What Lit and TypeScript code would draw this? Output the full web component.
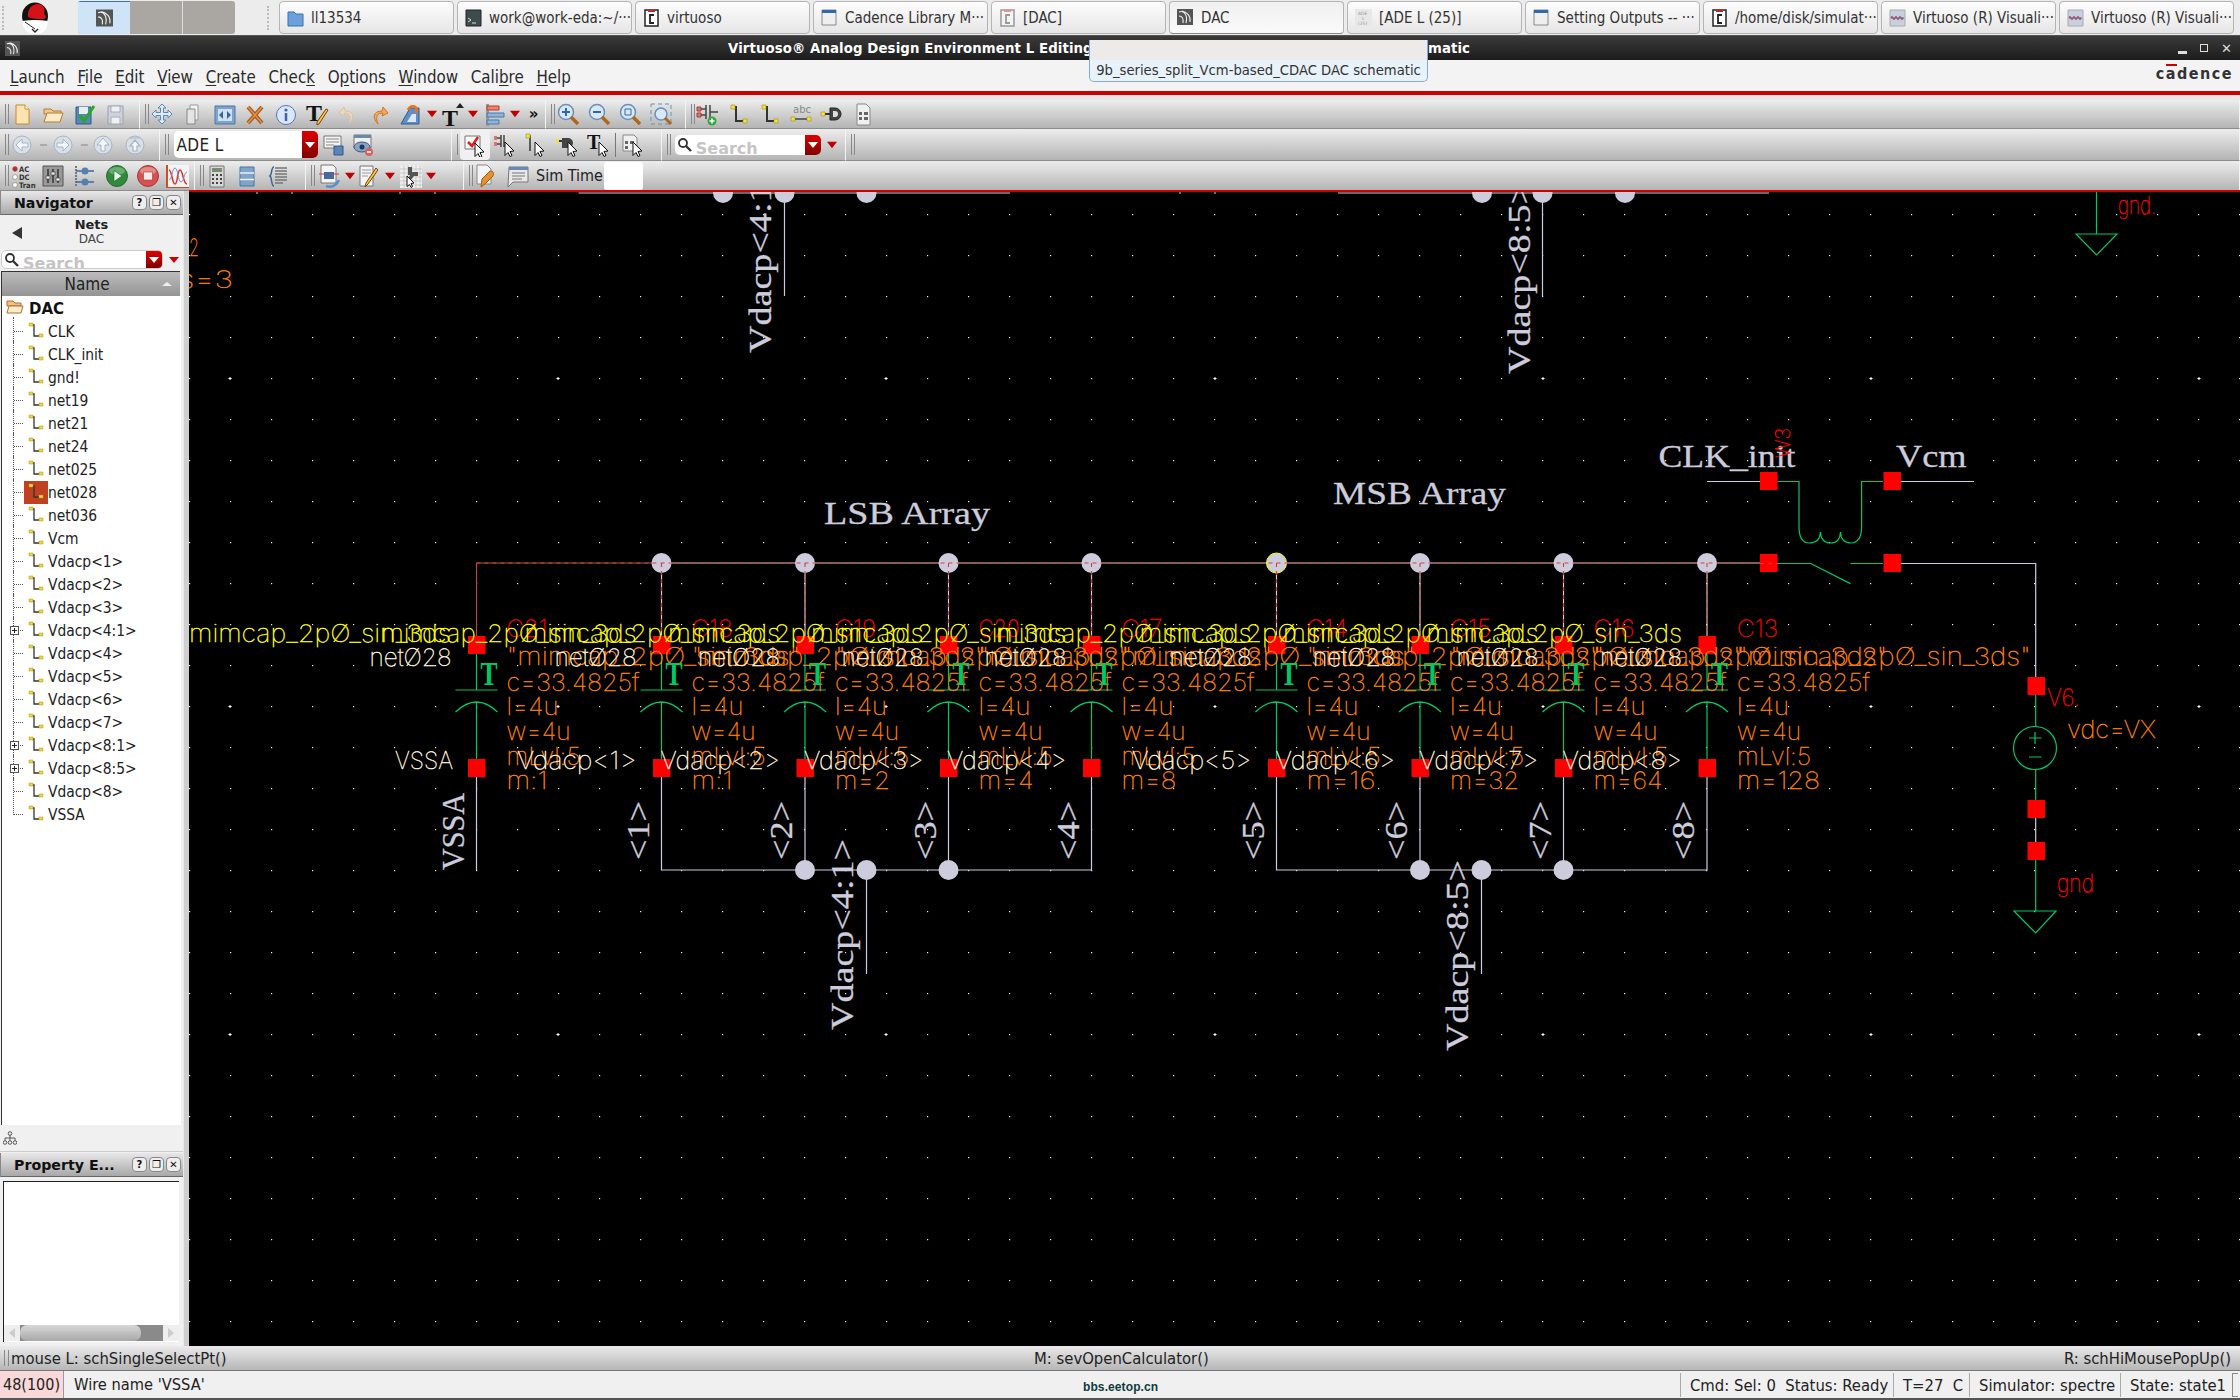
import { LitElement, html, css, svg } from "lit";
import { customElement } from "lit/decorators.js";

const ICONS: Record<string, any> = {
  doc: svg`<path d="M6 3h9l4 4v15H6z" fill="#fbe3b0" stroke="#c98a30"/><path d="M15 3v4h4" fill="#fff" stroke="#c98a30"/>`,
  open: svg`<path d="M3 7h7l2 2h8v3H3z" fill="#f2c888" stroke="#b87a30"/><path d="M3 20l3-9h16l-3 9z" fill="#fdebc8" stroke="#b87a30"/>`,
  savechk: svg`<path d="M4 5h15v17H4z" fill="#5b84b8" stroke="#2f5688"/><path d="M7 5h9v7H7z" fill="#e8eef6"/><path d="M7 13l5 6 10-15" fill="none" stroke="#28a828" stroke-width="3"/>`,
  save: svg`<path d="M5 4h15v18H5z" fill="#cdd3da" stroke="#9aa2aa"/><path d="M8 4h9v6H8zM8 15h9v7H8z" fill="#eef0f2" stroke="#aab"/>`,
  move: svg`<path d="M12 2l4 4h-2.500v4.500H18V8l4 4-4 4v-2.500h-4.500V18H16l-4 4-4-4h2.500v-4.500H6V16l-4-4 4-4v2.500h4.500V6H8z" fill="#dfeaf6" stroke="#5a88b8"/>`,
  copy: svg`<path d="M9 3h8v15H9z" fill="#f4f4f4" stroke="#999"/><path d="M6 7h8v15H6z" fill="#e4e4e4" stroke="#888"/>`,
  stretch: svg`<path d="M3 4h20v18H3z" fill="#7ea4cc" stroke="#4d76a4"/><path d="M6 7h14v12H6z" fill="#cfe0f0"/><path d="M11 9l-4 4 4 4zM15 9l4 4-4 4z" fill="#3a6494"/>`,
  del: svg`<path d="M5 5l14 16M19 5L5 21" stroke="#a85a18" stroke-width="4"/><path d="M5 5l14 16M19 5L5 21" stroke="#e89048" stroke-width="1.500"/>`,
  info: svg`<circle cx="12" cy="13" r="9.500" fill="#dbe6f6" stroke="#4f78c0"/><circle cx="12" cy="8" r="1.600" fill="#3a64b0"/><path d="M12 11v8" stroke="#3a64b0" stroke-width="2.500"/>`,
  tprop: svg`<text x="1" y="19" class="ib">T</text><path d="M23 8L14 22l-2 1 0-3L21 7z" fill="#f4c840" stroke="#804010"/>`,
  undo: svg`<path d="M8 5L3 11l6 3-1-3c6 0 8 4 5 11 6-6 5-13-4-13z" fill="#f0d8c0" stroke="#dcc0a4"/>`,
  redo: svg`<path d="M16 5l5 6-6 3 1-3c-6 0-8 4-5 11-6-6-5-13 4-13z" fill="#f0a860" stroke="#d07820"/>`,
  rotate: svg`<path d="M12 6L3 22h18V6z" fill="#5f8fc8" stroke="#2f5a94"/><path d="M14 12L9 20h9V12z" fill="#dbe6f6"/><path d="M10 8c2-5 8-5 9 0l-2 3" fill="none" stroke="#e07820" stroke-width="2.500"/>`,
  tup: svg`<text x="2" y="24" class="ib">T</text><path d="M14 2l-4 5h8z" fill="#222" transform="translate(6 -1)"/>`,
  align: svg`<path d="M4 2h3v22H4" fill="#999"/><path d="M5 4h12v4H5z" fill="#f08070" stroke="#b04030"/><path d="M5 11h17v4H5z" fill="#8fb4dc" stroke="#4a78ac"/><path d="M5 18h12v4H5z" fill="#8fb4dc" stroke="#4a78ac"/>`,
  zin: svg`<circle cx="10" cy="10" r="7.500" fill="#d8e8f8" stroke="#6a90b8" stroke-width="1.500"/><path d="M6 10h8M10 6v8" stroke="#2f68a8" stroke-width="2"/><path d="M15 15l7 7" stroke="#b06818" stroke-width="3.500"/>`,
  zout: svg`<circle cx="10" cy="10" r="7.500" fill="#d8e8f8" stroke="#6a90b8" stroke-width="1.500"/><path d="M6 10h8" stroke="#2f68a8" stroke-width="2"/><path d="M15 15l7 7" stroke="#b06818" stroke-width="3.500"/>`,
  zfit: svg`<circle cx="10" cy="10" r="7.500" fill="#d8e8f8" stroke="#6a90b8" stroke-width="1.500"/><path d="M7 7h6v6H7z" fill="none" stroke="#2f68a8"/><path d="M15 15l7 7" stroke="#b06818" stroke-width="3.500"/>`,
  zarea: svg`<path d="M2 2h20v20H2z" fill="none" stroke="#6a90b8" stroke-dasharray="4 3"/><circle cx="12" cy="12" r="6" fill="#d8e8f8" stroke="#6a90b8" stroke-width="1.500"/><path d="M16 16l6 6" stroke="#b06818" stroke-width="3"/>`,
  addinst: svg`<path d="M3 7h7M3 13h7M10 3v14M14 3v14M14 10h8" stroke="#444" stroke-width="1.500" fill="none"/><path d="M1 5h4v4H1zM1 11h4v4H1z" fill="#e07070" stroke="#a04040"/><circle cx="16" cy="19" r="4.500" fill="#30a840"/><path d="M13.500 19h5M16 16.500v5" stroke="#fff" stroke-width="1.500"/>`,
  wire: svg`<path d="M7 5h2v14h8" fill="none" stroke="#333" stroke-width="2"/><path d="M4 3h4v4H4zM16 17h4v4h-4z" fill="#f4e040" stroke="#a09020" stroke-width=".6"/>`,
  label: svg`<text x="4" y="11" class="ismall">abc</text><path d="M4 17h16" stroke="#444" stroke-width="1.500"/><path d="M2 15h4v4H2zM18 15h4v4h-4z" fill="#f4e040" stroke="#a09020" stroke-width=".6"/>`,
  gate: svg`<path d="M10 6h5a6 6 0 010 12h-5z" fill="#444" stroke="#222"/><path d="M13 9h2a3 3 0 010 6h-2z" fill="#ddd"/><path d="M4 12h6" stroke="#333" stroke-width="2"/><path d="M1 10h4v4H1z" fill="#f4e040" stroke="#a09020" stroke-width=".6"/>`,
  doclist: svg`<path d="M6 2h9l4 4v17H6z" fill="#f0f0f0" stroke="#888"/><path d="M8 10h3v3H8zM8 15h3v3H8zM13 10h4v3h-4zM13 15h4v3h-4z" fill="#666"/>`,
  navl: svg`<circle cx="12" cy="12" r="9" fill="#d8e0ea" stroke="#a8b4c4"/><path d="M6 12l6-6v4h6v4h-6v4z" fill="#f4f6f8" stroke="#a8b4c4"/>`,
  navr: svg`<circle cx="12" cy="12" r="9" fill="#d8e0ea" stroke="#a8b4c4"/><path d="M18 12l-6-6v4H6v4h6v4z" fill="#f4f6f8" stroke="#a8b4c4"/>`,
  navu: svg`<circle cx="12" cy="12" r="9" fill="#d8e0ea" stroke="#a8b4c4"/><path d="M12 5l-6 7h4v6h4v-6h4z" fill="#f4f6f8" stroke="#a8b4c4"/>`,
  navt: svg`<circle cx="12" cy="12" r="9" fill="#d8e0ea" stroke="#a8b4c4"/><path d="M7 5h10M12 7l-5 6h3v5h4v-5h3z" fill="#f4f6f8" stroke="#a8b4c4" stroke-width="1.200"/>`,
  savev: svg`<path d="M3 3h17v12H3z" fill="#f4f4f4" stroke="#777"/><path d="M5 6h13M5 9h13M5 12h8" stroke="#888"/><path d="M13 13h9v9h-9z" fill="#5b84b8" stroke="#2f5688"/>`,
  delv: svg`<path d="M3 2h17v13H3z" fill="#f0f0f0" stroke="#777"/><path d="M3 2h17v3H3z" fill="#6a88a8"/><ellipse cx="11" cy="14" rx="8" ry="5" fill="#8aa4c4" stroke="#3a5a84"/><circle cx="11" cy="14" r="2.500" fill="#1a3a64"/><circle cx="18" cy="19" r="4" fill="#d86060"/><path d="M16 19h4" stroke="#fff" stroke-width="1.500"/>`,
  selall: svg`<path d="M2 3h15v13H2z" fill="#f8f8f8" stroke="#777"/><path d="M5 9l4 4 6-9" fill="none" stroke="#d82020" stroke-width="2.500"/><path d="M12 10l9 9-4 .5 2 4-2 1-2-4-3 3z" fill="#fff" stroke="#111"/>`,
  selinst: svg`<path d="M2 5h6M2 11h6M8 2v12M11 2v12" stroke="#444" stroke-width="1.500"/><path d="M1 3h3v4H1zM1 9h3v4H1z" fill="#e07070"/><path d="M12 9l9 9-4 .5 2 4-2 1-2-4-3 3z" fill="#fff" stroke="#111"/>`,
  selwire: svg`<path d="M4 3h2v15" fill="none" stroke="#333" stroke-width="1.500"/><path d="M2 1h4v4H2z" fill="#f4e040" stroke="#a09020" stroke-width=".6"/><path d="M11 9l9 9-4 .5 2 4-2 1-2-4-3 3z" fill="#fff" stroke="#111"/>`,
  selgate: svg`<path d="M6 5h6a5 5 0 010 10H6z" fill="#444"/><path d="M1 8h5" stroke="#333" stroke-width="2"/><path d="M0 6h3v4H0z" fill="#f4e040"/><path d="M12 9l9 9-4 .5 2 4-2 1-2-4-3 3z" fill="#fff" stroke="#111"/>`,
  selt: svg`<text x="0" y="16" class="ib2">T</text><path d="M12 9l9 9-4 .5 2 4-2 1-2-4-3 3z" fill="#fff" stroke="#111"/>`,
  sellist: svg`<path d="M2 2h11l3 3v13H2z" fill="#f0f0f0" stroke="#888"/><path d="M4 8h3v3H4zM4 13h3v3H4zM9 8h4v3H9z" fill="#666"/><path d="M12 9l9 9-4 .5 2 4-2 1-2-4-3 3z" fill="#fff" stroke="#111"/>`,
  acdc: svg`<circle cx="3" cy="5" r="2.400" fill="#d02020" stroke="#777" stroke-width=".6"/><circle cx="3" cy="13" r="2.400" fill="#fff" stroke="#777" stroke-width=".6"/><circle cx="3" cy="21" r="2.400" fill="#fff" stroke="#777" stroke-width=".6"/><text x="7" y="8" class="ismall2">AC</text><text x="7" y="16" class="ismall2">DC</text><text x="7" y="24" class="ismall2">Trans</text>`,
  tune: svg`<path d="M2 2h20v20H2z" fill="#999" stroke="#555"/><path d="M7 5v14M12 5v14M17 5v14" stroke="#333" stroke-width="1.500"/><path d="M5 12h4v3H5zM10 8h4v3h-4zM15 14h4v3h-4z" fill="#eee" stroke="#333" stroke-width=".6"/>`,
  netlist: svg`<path d="M3 2v20" stroke="#777" stroke-dasharray="2 1" stroke-width="2"/><path d="M3 7h18M3 18h18" stroke="#3a6a9c" stroke-width="1.500"/><circle cx="12" cy="7" r="3.500" fill="#5480b0"/><circle cx="12" cy="18" r="3.500" fill="#5480b0"/>`,
  run: svg`<circle cx="12" cy="12" r="10.500" fill="#2f8a3c" stroke="#2a6a30"/><ellipse cx="12" cy="7" rx="8" ry="4" fill="#8cc894" opacity=".6"/><path d="M9 6.500l8 5.500-8 5.500z" fill="#e8f4e8" stroke="#1a5a24" stroke-width=".6"/>`,
  stop: svg`<circle cx="12" cy="12" r="10.500" fill="#d85050" stroke="#a03838"/><ellipse cx="12" cy="7" rx="8" ry="4" fill="#f0b0a8" opacity=".6"/><path d="M7.500 8h9v8h-9z" fill="#f4e8e8" stroke="#a03838" stroke-width=".6"/>`,
  wave: svg`<path d="M1 1h22v23H1z" fill="#f4f4f4"/><path d="M1 1v23h22" fill="none" stroke="#e04818" stroke-width="2"/><path d="M3 6c3 0 3 14 6 14s2-14 5-14 3 14 7 14" fill="none" stroke="#d83030" stroke-width="1.500"/><path d="M3 16c3 0 3-12 6-12s3 14 6 14 3-10 6-10" fill="none" stroke="#8090c0" stroke-width="1"/>`,
  calc: svg`<path d="M5 2h14v21H5z" fill="#d8d8d8" stroke="#777"/><path d="M7 4h10v4H7z" fill="#7a8a70"/><path d="M7 10h2v2H7zM11 10h2v2h-2zM15 10h2v2h-2zM7 14h2v2H7zM11 14h2v2h-2zM15 14h2v2h-2zM7 18h2v2H7zM11 18h2v2h-2zM15 18h2v2h-2z" fill="#444"/>`,
  db: svg`<path d="M5 3h14v19H5z" fill="#7fa4c8" stroke="#4a74a0"/><path d="M5 9h14M5 15.500h14" stroke="#e8f0f8" stroke-width="1.500"/>`,
  brace: svg`<path d="M8 3c-3 0-2 8-4 9 2 1 1 10 4 10" fill="none" stroke="#3a6494" stroke-width="1.500"/><path d="M9 4h12M9 7h12M9 10h12M9 13h12M9 16h12M9 19h8" stroke="#777" stroke-width="1.600"/>`,
  simdoc: svg`<path d="M3 1h12l3 3v15H3z" fill="#f4f4f4" stroke="#777"/><path d="M6 8h10v7H6z" fill="#4a68a0"/><path d="M1 10h5M16 10h5" stroke="#d04040"/><path d="M8 22c6 2 10 0 13-6" fill="none" stroke="#5a90c8" stroke-width="2.500"/>`,
  edit: svg`<path d="M3 2h13v20H3z" fill="#f4f4f4" stroke="#777"/><path d="M5 6h9M5 9h9M5 12h6" stroke="#999"/><path d="M21 6L11 20l-3 3 1-4L19 4z" fill="#f4c840" stroke="#804010"/>`,
  grid: svg`<path d="M1 1h22v24H1z" fill="#eee"/><path d="M1 5h22M1 9h22M1 13h22M1 17h22M1 21h22M5 1v24M9 1v24M13 1v24M17 1v24M21 1v24" stroke="#bbb" stroke-width=".7"/><path d="M9 3h4v5l6 0v4h-4l-4 5H8l3-6H9z" fill="#555"/><path d="M8 12l7 7-3 .5 1.500 3-1.500 1-1.500-3-2.500 2z" fill="#fff" stroke="#111"/>`,
  tool: svg`<path d="M4 1h10l4 4v15H4z" fill="#f4f4f4" stroke="#888"/><path d="M10 15l8-8c4 0 4 3 3 5l-8 8-4 3z" fill="#e89030" stroke="#a06010" transform="translate(-1 0)"/>`,
  note: svg`<path d="M4 3h19v15H8l-5 5z" fill="#e8e8e8" stroke="#777"/><path d="M4 3h19v3H4z" fill="#6a88b8"/><path d="M7 9h13M7 12h13M7 15h10" stroke="#777"/>`,
  dd: svg`<path d="M6 8h12l-6 8z" fill="#c00000"/>`,
};

function ic(name: string) {
  return html`<svg class="ico" viewBox="0 0 24 24" width="24" height="24" aria-hidden="true">${ICONS[name]}</svg>`;
}

type Item = { k: string; w: number; sel?: boolean };
const I = (k: string, w = 31, sel = false): Item => ({ k, w, sel });

const ROWS: { cls: string; segs: { w: number; items: Item[] }[] }[] = [
  {
    cls: "r1",
    segs: [
      { w: 140, items: [I("doc"), I("open"), I("savechk"), I("save")] },
      { w: 406, items: [I("move"), I("copy"), I("stretch"), I("del"), I("info"), I("tprop"), I("undo"), I("redo"), I("rotate"), I("dd", 13), I("tup", 27), I("dd", 14), I("align", 28), I("dd", 14), I("»", 24)] },
      { w: 140, items: [I("zin"), I("zout"), I("zfit"), I("zarea")] },
      { w: 1554, items: [I("addinst"), I("wire"), I("wire2"), I("label"), I("gate"), I("doclist")] },
    ],
  },
  {
    cls: "r2",
    segs: [
      { w: 160, items: [I("navl"), I("-", 11), I("navr", 29), I("-", 13), I("navu", 25), I("sp", 4), I("navt")] },
      { w: 292, items: [I("combo", 151), I("savev", 30), I("delv", 30)] },
      { w: 210, items: [I("sp", 1.5), I("selall", 30, true), I("selinst", 29), I("selwire", 33), I("selgate", 32), I("selt", 30), I("bar", 2), I("sellist", 34)] },
      { w: 184, items: [I("search", 152.5), I("dd", 22)] },
      { w: 1394, items: [] },
    ],
  },
  {
    cls: "r3",
    segs: [
      { w: 195, items: [I("sp", 4.5), I("acdc", 26), I("tune", 32), I("netlist", 32), I("run"), I("stop"), I("wave", 30)] },
      { w: 111, items: [I("calc", 30), I("db"), I("brace")] },
      { w: 158, items: [I("sp", 2.5), I("simdoc", 30), I("dd", 9), I("edit", 30), I("dd", 12), I("grid", 30), I("dd", 10)] },
      { w: 1776, items: [I("tool", 28), I("note", 37), I("simtime", 68), I("timebox", 39)] },
    ],
  },
];

const MENU = [
  ["", "L", "aunch"],
  ["", "F", "ile"],
  ["", "E", "dit"],
  ["", "V", "iew"],
  ["", "C", "reate"],
  ["Chec", "k", ""],
  ["O", "p", "tions"],
  ["", "W", "indow"],
  ["Cali", "b", "re"],
  ["", "H", "elp"],
];

const TASKS: [string, string][] = [
  ["folder", "ll13534"],
  ["term", "work@work-eda:~/···"],
  ["cicon", "virtuoso"],
  ["win", "Cadence Library M···"],
  ["cdim", "[DAC]"],
  ["swirl", "DAC"],
  ["ade", "[ADE L (25)]"],
  ["win", "Setting Outputs -- ···"],
  ["cicon", "/home/disk/simulat···"],
  ["wavei", "Virtuoso (R) Visuali···"],
  ["wavei", "Virtuoso (R) Visuali···"],
];

const TREE = ["CLK", "CLK_init", "gnd!", "net19", "net21", "net24", "net025", "net028", "net036", "Vcm", "Vdacp<1>", "Vdacp<2>", "Vdacp<3>", "Vdacp<4:1>", "Vdacp<4>", "Vdacp<5>", "Vdacp<6>", "Vdacp<7>", "Vdacp<8:1>", "Vdacp<8:5>", "Vdacp<8>", "VSSA"];

const SWIRL = svg`<path d="M0 0h16v16H0z" fill="#555"/><path d="M2 3c5-2 9 3 7 11M5 2c5 1 9 5 8 11M2 7c3 0 5 3 4 7" fill="none" stroke="#eee" stroke-width="1.100"/>`;

function taskIcon(k: string) {
  const body: Record<string, any> = {
    folder: svg`<path d="M1 3h6l2 2h7v12H1z" fill="#6aa0dc" stroke="#3a70ac"/>`,
    term: svg`<path d="M1 1h15v16H1z" fill="#3c4c4c" stroke="#222"/><path d="M3 9l3 2-3 2M7 14h4" stroke="#ddd" fill="none"/>`,
    cicon: svg`<path d="M2 1h13v16H2z" fill="#fff" stroke="#222" stroke-width="1.500"/><path d="M5 1h7v2H5z" fill="#d02020"/><path d="M11 6H7v8h4" fill="none" stroke="#222" stroke-width="1.800"/>`,
    cdim: svg`<path d="M2 1h13v16H2z" fill="#f4f4f4" stroke="#999" stroke-width="1.500"/><path d="M5 1h7v2H5z" fill="#e89090"/><path d="M11 6H7v8h4" fill="none" stroke="#999" stroke-width="1.800"/>`,
    win: svg`<path d="M1 1h14v15H1z" fill="#efefef" stroke="#888"/><path d="M1 1h14v3H1z" fill="#2f6aac"/>`,
    swirl: SWIRL,
    ade: svg`<path d="M0 0h17v17H0z" fill="#e8e8e8"/><text x="3" y="6" class="tiny">ADE</text><text x="7" y="11" class="tiny">L</text><text x="3" y="16" class="tiny">(25)</text>`,
    wavei: svg`<path d="M1 1h15v16H1z" fill="#c8d0e0" stroke="#aaa"/><path d="M2 9c2-6 2 6 4 0s2 6 4 0 2 6 4 0" fill="none" stroke="#c03030"/><path d="M2 9h13" stroke="#5060a0"/>`,
  };
  return html`<svg class="tico" viewBox="0 0 17 18" width="17" height="18" aria-hidden="true">${body[k]}</svg>`;
}

const COLS = [476.5, 661.5, 805, 948.5, 1091.5, 1276.5, 1420, 1563.5, 1707];
const NAMES = ["C21", "C18", "C19", "C20", "C17", "C14", "C15", "C16", "C13"];
const MS: [string, number][] = [["m:1", 41], ["m:1", 41], ["m=2", 55], ["m=4", 55], ["m=8", 55], ["m=16", 69], ["m=32", 69], ["m=64", 69], ["m=128", 83]];
const PINS = ["VSSA", "Vdacp<1>", "Vdacp<2>", "Vdacp<3>", "Vdacp<4>", "Vdacp<5>", "Vdacp<6>", "Vdacp<7>", "Vdacp<8>"];
const BUS = ["<1>", "<2>", "<3>", "<4>", "<5>", "<6>", "<7>", "<8>"];

const t = (x: number, y: number, w: number, s: string, c: string) =>
  svg`<text x=${x} y=${y} textLength=${w} lengthAdjust="spacingAndGlyphs" class=${c}>${s}</text>`;
const tr = (x: number, y: number, w: number, s: string, c: string) =>
  svg`<text x=${x} y=${y} textLength=${w} lengthAdjust="spacingAndGlyphs" class=${c} transform="rotate(-90 ${x} ${y})">${s}</text>`;
const sq = (x: number, y: number) => svg`<rect x=${x - 8.5} y=${y - 9} width="17.5" height="18" class="pin"/>`;
const jn = (x: number, y: number) => svg`<circle cx=${x} cy=${y} r="10" class="jn"/>`;

const HOT = "M476.500 565H1768.500M476.500 565V638M661.500 565V638M805 565V638M948.500 565V638M1091.500 565V638M1276.500 565V638M1420 565V638M1563.500 565V638M1707 565V638";
const HOT_W = "M661.500 565H1768.500M661.500 565V638M805 565V638M948.500 565V638M1091.500 565V638M1276.500 565V638M1420 565V638M1563.500 565V638M1707 565V638";
const MIM = "mimcap_2pØ_sin_3ds";

function schematic() {
  const majors: any[] = [];
  for (const x of [230, 558, 886, 1215, 1543, 1871, 2199])
    for (const y of [380, 708, 1036]) majors.push(svg`<path d="M${x - 1.5} ${y + 0.5}h3M${x} ${y - 1}v3" class="major"/>`);
  return svg`
  <svg class="sch" viewBox="189 193 2051 1153" width="2051" height="1153" aria-hidden="true">
    <defs>
      <pattern id="grid" x="189" y="11" width="41" height="41" patternUnits="userSpaceOnUse">
        <rect x="0" y="0" width="1.200" height="1.200" fill="#f0f0f0"/>
      </pattern>
    </defs>
    <rect x="189" y="193" width="2051" height="1153" fill="#000"/>
    <rect x="189" y="193" width="2051" height="1153" fill="url(#grid)"/>
    ${majors}

    <!-- clipped top copies of the buses -->
    <path d="M578.500 195H1010M1338 195H1769M784.500 195V298M1542.500 195V298" class="w"/>
    ${[723, 784.5, 866.5, 1482, 1542.5, 1625].map((x) => jn(x, 195))}
    <path d="M257 193v3M292 193v3M400 193v3M435 193v3M1180 193v3M1215 193v3" class="tick"/>
    ${tr(771, 355, 191, "Vdacp<4:1>", "sf")}
    ${tr(1529.5, 376, 191, "Vdacp<8:5>", "sf")}
    <path d="M2096.500 193V236M2076 236H2117L2096.500 257Z" class="g"/>
    ${t(2118, 216, 38, "gnd.", "st red")}
    ${t(189, 258, 10, "2", "st or")}
    ${t(160, 290, 73, "ds=3", "st or")}

    <!-- schematic wires -->
    <path d="M661.500 779V872H1091.500V779M805 779V872M948.500 779V872M866.500 872V976" class="w"/>
    <path d="M1276.500 779V872H1707V779M1420 779V872M1563.500 779V872M1481.500 872V976" class="w"/>
    <path d="M476.500 779V872" class="w"/>
    ${COLS.map(
      (c) => svg`<path d="M${c} 656V692M${c - 21} 692H${c + 21}M${c - 21} 714Q${c} 694 ${c + 21} 714M${c} 704V761" class="g"/>`
    )}
    <path d=${HOT_W} class="w"/>
    <path d="M476.500 638V565H661.500" class="lead"/>
    ${[661.5, 805, 948.5, 1091.5, 1420, 1563.5, 1707].map((x) => jn(x, 565))}
    <circle cx="1276.500" cy="565" r="10" class="jn yo"/>
    <path d=${HOT} class="dash"/>
    ${[805, 948.5, 866.5, 1420, 1481.5, 1563.5].map((x) => jn(x, 872))}
    ${COLS.map((c) => svg`${sq(c, 647)}${sq(c, 770)}`)}

    <!-- switch and source -->
    <path d="M1707 483.500H1760M1901 483.500H1974M1901 565.500H2035.700V679M2035.700 820V844" class="w"/>
    <path d="M1777 483.500H1799V528Q1799 545 1809 545Q1820 545 1820.500 534Q1821 545 1830.500 545Q1840 545 1840.500 534Q1841 545 1851 545Q1861.600 545 1861.600 528V483.500H1883M1777 565.500H1810.700L1850.400 585.600M1850.400 565.500H1883" class="g"/>
    <path d="M2035.700 697V728.500M2035.700 771V802M2035.700 862V913M2014 913H2056L2035.700 935Z" class="g"/>
    <circle cx="2035" cy="750" r="21.500" class="g"/>
    <path d="M2029 740H2041.500M2035 734V746M2029 759H2041.500" class="g"/>
    ${sq(1768.5, 483)}${sq(1892, 483)}${sq(1768.5, 565)}${sq(1892, 565)}
    ${sq(2036, 688)}${sq(2036, 811)}${sq(2036, 853)}
    <path d="M1760 565.500H1778" class="dash"/>

    <!-- component labels -->
    ${COLS.map(
      (c, i) => svg`
        ${t(c + 4, 687, 17, "T", "tg")}
        ${i === 0 ? t(189, 644, 262, MIM, "st ye") : t(c - 280.5, 644, 255.5, MIM, "st ye")}
        ${t(c + 30, 639, 41, NAMES[i], "st red")}
        ${t(c - 107, 667.5, 82, "netØ28", "st cr")}
        ${t(c + 30, 667, 294, '"' + MIM + '"', "st or")}
        ${t(c + 30, 692.5, 133, "c=33.4825f", "st or")}
        ${t(c + 30, 716.5, 52, "l=4u", "st or")}
        ${t(c + 30, 741.5, 64, "w=4u", "st or")}
        ${t(c + 30, 766.5, 74, "mLvl:5", "st or")}
        ${t(c + 30, 791, MS[i][1], MS[i][0], "st or")}
        ${i === 0 ? t(395, 771, 58, PINS[i], "st cr") : t(c - 144.5, 771, 119.5, PINS[i], "st cr")}
      `
    )}
    ${COLS.slice(1).map((c, i) => tr(c - 13, 862, 59, BUS[i], "sf"))}
    ${tr(464, 872, 77, "VSSA", "sf")}
    ${tr(853, 1032, 191, "Vdacp<4:1>", "sf")}
    ${tr(1468, 1053, 191, "Vdacp<8:5>", "sf")}
    ${t(824, 526, 166, "LSB Array", "sf")}
    ${t(1333, 506, 173, "MSB Array", "sf")}
    ${t(1658.5, 469, 137, "CLK_init", "sf")}
    ${t(1896, 469, 70.5, "Vcm", "sf")}
    ${tr(1790, 460, 30, "W3", "st red sm")}
    ${t(2047, 708, 33, "V6.", "st red")}
    ${t(2067, 740, 89, "vdc=VX", "st or")}
    ${t(2057, 893.5, 37, "gnd", "st red")}
  </svg>`;
}

@customElement("app-root")
export class AppRoot extends LitElement {
  static styles = css`
    :host {
      display: block;
      position: relative;
      width: 2240px;
      height: 1400px;
      overflow: hidden;
      font-family: "DejaVu Sans Condensed", "DejaVu Sans", sans-serif;
      color: #222;
      background: #f0f0f0;
    }
    .root { display: flex; flex-direction: column; height: 1400px; }

    /* desktop panel */
    .panel { height: 36px; flex: none; display: flex; align-items: flex-start; padding-top: 1px; box-sizing: border-box; background: #ececec; border-bottom: 1px solid #555; }
    .handle { width: 4px; height: 24px; margin: 5px 2px 0 2px; border-left: 2px dotted #bbb; flex: none; }
    .rh { width: 32px; height: 32px; margin: 1px 0 0 9px; flex: none; }
    .ws { display: flex; width: 157px; height: 33px; margin-left: 27px; flex: none; border-radius: 3px; overflow: hidden; background: #aaa6a2; }
    .ws div { display: flex; align-items: center; justify-content: center; box-sizing: border-box; }
    .ws .on { width: 52px; background: #d0e4f8; border-top: 1px solid #3a70ac; }
    .ws .mid { width: 53px; border-right: 1px solid #ddd; }
    .h2 { margin-left: 32px; margin-right: 6px; }
    .tasks { display: flex; gap: 3px; }
    .task { width: 175px; height: 33px; flex: none; display: flex; align-items: center; gap: 7px; padding-left: 7px; box-sizing: border-box; border: 1px solid #b4b4b4; border-radius: 4px; background: linear-gradient(#fdfdfd, #e6e6e6); font-size: 15px; white-space: nowrap; overflow: hidden; color: #333; }
    .task.act { background: linear-gradient(#f0f0f0, #fafafa); border-bottom-color: #888; }
    .tico { flex: none; }
    .tiny { font: 4.500px "DejaVu Sans", sans-serif; fill: #999; }

    /* window title */
    .title { height: 24px; flex: none; display: flex; align-items: center; background: linear-gradient(#3a3a3a, #1c1c1c); color: #fff; position: relative; }
    .title .wi { margin-left: 5px; width: 15px; height: 15px; flex: none; }
    .title .tt { flex: 1; text-align: center; font: bold 13.300px "DejaVu Sans", sans-serif; letter-spacing: 0.1px; white-space: nowrap; }
    .wc { display: flex; align-items: center; gap: 13px; margin-right: 8px; font: bold 13px "DejaVu Sans", sans-serif; color: #ddd; }
    .wc .mn { width: 9px; height: 3px; background: #ddd; margin-top: 8px; }
    .wc .mx { width: 6px; height: 6px; border: 1px solid #ddd; }

    /* menu */
    .menu { height: 31px; flex: none; display: flex; align-items: center; background: #f3f3f3; font-size: 16.800px; padding: 3px 0 0 10px; position: relative; box-sizing: border-box; }
    .menu .mi { margin-right: 12.700px; color: #2a2a2a; }
    .menu u { text-underline-offset: 2px; }
    .cad { position: absolute; right: 7px; top: 4px; font: bold 16px "DejaVu Sans Condensed", sans-serif; letter-spacing: 1.500px; color: #333; }
    .cad span { position: relative; }
    .cad span::before { content: ""; position: absolute; left: 0; right: 0; top: 0; height: 2px; background: #c00; }
    .redl { height: 4px; flex: none; background: #cc0000; }
    .gapl { height: 5px; flex: none; background: #e6e6e6; }

    /* toolbars */
    .row { display: flex; flex: none; overflow: hidden; }
    .r1 { height: 29px; }
    .r2 { height: 32px; }
    .r3 { height: 30px; }
    .seg { flex: none; display: flex; align-items: center; box-sizing: border-box; background: linear-gradient(#ededed, #b4b4b4); border-right: 1px solid #f4f4f4; border-bottom: 1px solid #8c8c8c; }
    .grip { width: 2px; height: 70%; margin: 0 -2.500px 0 5px; flex: none; border-left: 1px solid #888; border-right: 1px solid #888; }
    .cell { height: 100%; flex: none; display: flex; align-items: center; justify-content: center; }
    .cell.sel { background: #f0f0f0; border-radius: 4px; }
    .ico { flex: none; }
    .cell .ddi { width: 20px; height: 20px; flex: none; }
    .ib { font: bold 24px "Liberation Serif", serif; fill: #111; }
    .ib2 { font: bold 20px "Liberation Serif", serif; fill: #111; }
    .ismall { font: 10px "DejaVu Sans", sans-serif; fill: #888; }
    .ismall2 { font: bold 7.500px "DejaVu Sans Condensed", sans-serif; fill: #333; }
    .chev { font: bold 15px "DejaVu Sans", sans-serif; color: #111; }
    .dash2 { width: 7px; height: 2px; background: #aaa; }
    .vbar { width: 1px; height: 24px; background: #777; }
    .combo { width: 144px; height: 27px; display: flex; align-items: center; background: #fff; border-radius: 5px; box-sizing: border-box; padding-left: 3px; font-size: 17px; letter-spacing: .4px; overflow: hidden; justify-content: space-between; margin-left: 7px; flex: none; }
    .rbtn { width: 16px; align-self: stretch; flex: none; display: flex; align-items: center; justify-content: center; background: linear-gradient(#dd0000, #800000); }
    .rbtn::after { content: ""; border-left: 5px solid transparent; border-right: 5px solid transparent; border-top: 6px solid #fff; }
    .srch { width: 146px; height: 20px; margin-left: 6px; display: flex; align-items: center; background: #fff; border-radius: 5px; box-sizing: border-box; overflow: hidden; flex: none; }
    .srch .mg { flex: none; margin: 0 1px 0 2px; }
    .srch .ph { flex: 1; font: bold 16px "DejaVu Sans", sans-serif; color: #c4c4c4; padding-top: 8px; }
    .simt { font-size: 16px; white-space: nowrap; color: #222; }
    .tbox { width: 39px; height: 28px; background: #fff; border-radius: 3px; }

    /* body */
    .body { flex: 1; display: flex; min-height: 0; }
    .left { width: 183px; flex: none; display: flex; flex-direction: column; background: #f0f0f0; }
    .strip { width: 6px; flex: none; background: #cfcfcf; border-left: 1px solid #e8e8e8; box-sizing: border-box; }
    .canvas { flex: 1; position: relative; background: #000; border-top: 2px solid #cc0000; margin-top: -1px; overflow: hidden; }
    .sch { position: absolute; left: 0; top: -1px; display: block; }
    .w { fill: none; stroke: #ccccdc; stroke-width: 1.200; }
    .g { fill: none; stroke: #00c864; stroke-width: 1.200; }
    .lead { fill: none; stroke: #a05050; stroke-width: 1; }
    .dash { fill: none; stroke: #d84030; stroke-width: 1.100; stroke-dasharray: 4 4; }
    .tick { stroke: #ddd; stroke-width: 1; }
    .major { stroke: #fff; stroke-width: 1; }
    .jn { fill: #ccccdc; }
    .yo { stroke: #ffff00; stroke-width: 1; }
    .pin { fill: #ff0000; }
    .st { font-family: Inter, "DejaVu Sans", sans-serif; font-weight: 100; font-size: 24px; stroke-width: 0.400px; }
    .sm { font-size: 20px; }
    .ye { fill: #ffff00; stroke: #ffff00; }
    .or { fill: #ff8000; stroke: #ff8000; }
    .red { fill: #ff0000; stroke: #ff0000; }
    .cr { fill: #fff4dc; stroke: #fff4dc; }
    .sf { font-family: "Liberation Serif", serif; font-size: 32px; fill: #ccccdc; stroke: #ccccdc; stroke-width: 0.300px; }
    .tg { font: bold 33px "Liberation Serif", serif; fill: #00c864; }

    .dock { height: 24px; flex: none; display: flex; align-items: center; background: linear-gradient(#e8e8e8, #a8a8a8); border-bottom: 1px solid #666; border-left: 1px solid #888; font: bold 14.200px "DejaVu Sans", sans-serif; padding-left: 13px; box-sizing: border-box; }
    .dock .dt { flex: 1; color: #111; }
    .dbtn { width: 13px; height: 13px; margin-right: 2px; flex: none; border: 1px solid #888; border-radius: 4px; background: #eee; font: bold 10px "DejaVu Sans", sans-serif; text-align: center; line-height: 13px; color: #111; box-sizing: content-box; }
    .nets { height: 35px; flex: none; display: flex; align-items: center; position: relative; }
    .nets .bk { width: 0; height: 0; margin-left: 12px; border-top: 6px solid transparent; border-bottom: 6px solid transparent; border-right: 10px solid #333; }
    .nets .nt { position: absolute; left: 0; right: 0; top: 3px; text-align: center; font: bold 13px "DejaVu Sans", sans-serif; line-height: 14px; }
    .nets .nt small { display: block; font: 12px "DejaVu Sans", sans-serif; color: #444; }
    .lsearch { height: 19px; flex: none; display: flex; align-items: center; }
    .lsearch .srch { width: 162px; height: 19px; margin: 0 0 0 1px; border: 1px solid #ccc; }
    .lsearch .dd2 { margin-left: 6px; border-left: 5px solid transparent; border-right: 5px solid transparent; border-top: 6px solid #c00; }
    .thead { height: 25px; margin: 2px 3px 0 1px; padding-right: 8px; flex: none; display: flex; align-items: center; position: relative; background: linear-gradient(#bcbcbc, #949494); border-top: 1px solid #333; border-left: 1px solid #333; font-size: 17px; color: #222; justify-content: center; box-sizing: border-box; }
    .thead::after { content: ""; position: absolute; right: 8px; top: 10px; border-left: 5px solid transparent; border-right: 5px solid transparent; border-bottom: 4px solid #eee; }
    .tree { flex: 1; margin: 0 2px 0 1px; background: #fff; border-left: 1px solid #333; padding-top: 1px; min-height: 0; }
    .trow { height: 23px; display: flex; align-items: center; font-size: 15.400px; position: relative; color: #222; padding-left: 46px; }
    .trow.top { padding-left: 27px; font: bold 15px "DejaVu Sans", sans-serif; color: #111; }
    .trow:not(.top)::before { content: ""; position: absolute; left: 11px; top: -3px; bottom: 0; border-left: 1px dotted #555; }
    .trow.last::before { bottom: 11px; }
    .trow:not(.top)::after { content: ""; position: absolute; left: 12px; width: 9px; top: 11px; border-top: 1px dotted #555; }
    .trow .ni { position: absolute; left: 25px; top: 2px; width: 17px; height: 17px; }
    .trow.hit .nibg { position: absolute; left: 22px; top: 0; width: 24px; height: 23px; background: #c04020; }
    .trow .fo { position: absolute; left: 4px; top: 2px; }
    .plus { position: absolute; left: 8px; top: 7px; width: 7px; height: 7px; border: 1px solid #555; background: #fff; z-index: 1; display: flex; align-items: center; justify-content: center; }
    .plus::before { content: ""; width: 5px; height: 1px; background: #222; position: absolute; }
    .plus::after { content: ""; width: 1px; height: 5px; background: #222; position: absolute; }
    .foot { height: 27px; flex: none; display: flex; align-items: center; padding-left: 3px; border-bottom: 1px solid #ccc; box-sizing: border-box; }
    .dock.pr { margin-top: 1px; }
    .pbox { height: 161px; margin: 4px 4px 4px 3px; flex: none; background: #fff; border-top: 1px solid #222; border-left: 1px solid #222; display: flex; flex-direction: column; justify-content: flex-end; box-sizing: border-box; }
    .sb { height: 16px; display: flex; background: #8a8a8a; align-items: stretch; margin-bottom: 1px; }
    .sb .ar { width: 16px; flex: none; background: #eee; display: flex; align-items: center; justify-content: center; }
    .sb .ar.l::before { content: ""; border-top: 5px solid transparent; border-bottom: 5px solid transparent; border-right: 6px solid #ccc; }
    .sb .ar.r::before { content: ""; border-top: 5px solid transparent; border-bottom: 5px solid transparent; border-left: 6px solid #ccc; }
    .sb .th { width: 121px; flex: none; background: linear-gradient(#d8d8d8, #a8a8a8); border-radius: 7px; }
    .sb .tr { flex: 1; }

    /* status */
    .s1 { height: 25px; flex: none; display: flex; align-items: center; position: relative; background: linear-gradient(#eaeaea, #b6b6b6); border-bottom: 1px solid #777; font-size: 16.500px; box-sizing: border-box; justify-content: space-between; padding: 0 9px 0 4px; color: #222; }
    .s1 .g2 { width: 3px; height: 16px; border-left: 1px solid #888; border-right: 1px solid #888; margin-right: 2px; flex: none; }
    .s1 .lf { display: flex; align-items: center; width: 500px; }
    .s1 .mid { position: absolute; left: 1034px; }
    .s2 { height: 29px; flex: none; display: flex; align-items: center; position: relative; background: #f0f0f0; border-bottom: 2px solid #555; box-sizing: border-box; font-size: 16.300px; color: #222; }
    .pct { width: 64px; height: 100%; flex: none; background: #f8d8d8; padding-left: 3px; display: flex; align-items: center; border-right: 1px solid #999; box-sizing: border-box; font-size: 16px; }
    .wmsg { margin-left: 10px; flex: none; }
    .wm { position: absolute; left: 1083px; top: 9px; font: bold 12px "Liberation Sans", sans-serif; color: #0e3c3c; letter-spacing: .1px; }
    .rt { position: absolute; left: 1680px; right: 0; top: 2px; bottom: 1px; display: flex; align-items: center; font-size: 16.500px; }
    .rt div { height: 100%; display: flex; align-items: center; border-left: 1px solid #aaa; box-sizing: border-box; padding-left: 9px; flex: none; white-space: pre; }
    .rg { width: 5px; height: 22px; border: 1px solid #888; border-width: 1px 0 1px 1px; margin-left: 2px; }

    /* tooltip over the title bar */
    .tip { position: absolute; left: 1089px; top: 40px; width: 339px; height: 42px; box-sizing: border-box; border: 1px solid #88a8d8; border-top: none; border-radius: 0 0 5px 5px; background: linear-gradient(#ecebea 0, #ecebea 49%, #e8f2fb 49%); display: flex; align-items: flex-end; justify-content: center; padding-bottom: 3px; font: 13.200px "DejaVu Sans", sans-serif; color: #333; white-space: nowrap; }
  `;

  private cell(it: Item) {
    let inner: any;
    switch (it.k) {
      case "»": inner = html`<span class="chev">»</span>`; break;
      case "-": inner = html`<span class="dash2"></span>`; break;
      case "sp": inner = html``; break;
      case "bar": inner = html`<span class="vbar"></span>`; break;
      case "wire2": inner = ic("wire"); break;
      case "dd": inner = html`<svg class="ddi" viewBox="0 0 24 24">${ICONS.dd}</svg>`; break;
      case "combo": inner = html`<div class="combo"><span>ADE L</span><span class="rbtn"></span></div>`; break;
      case "search": inner = this.search(); break;
      case "simtime": inner = html`<span class="simt">Sim Time</span>`; break;
      case "timebox": inner = html`<div class="tbox"></div>`; break;
      default: inner = ic(it.k);
    }
    return html`<div class="cell ${it.sel ? "sel" : ""}" style="width:${it.w}px">${inner}</div>`;
  }

  private search() {
    return html`<div class="srch">
      <svg class="mg" width="18" height="16" viewBox="0 0 18 16"><circle cx="6" cy="6" r="4" fill="#fff" stroke="#333" stroke-width="1.800"/><path d="M9 9l5 5" stroke="#333" stroke-width="2.400"/></svg>
      <span class="ph">Search</span><span class="rbtn"></span>
    </div>`;
  }

  private netIcon() {
    return html`<svg class="ni" viewBox="0 0 17 17"><path d="M5 3h2v11h7" fill="none" stroke="#333" stroke-width="1.300"/><path d="M2 1h4v3H2zM12 12h4v3h-4z" fill="#f0d838" stroke="#b09020" stroke-width=".5"/></svg>`;
  }

  render() {
    return html`<div class="root">
      <div class="panel">
        <div class="handle"></div>
        <svg class="rh" viewBox="0 0 32 32" aria-hidden="true">
          <ellipse cx="16" cy="14" rx="13" ry="13.500" fill="#111"/>
          <path d="M3 19Q16 17 29 19Q28 32 16 32Q5 32 3 19z" fill="#fff"/>
          <path d="M9 15C8 7 13 2 19 2c5 0 8 5 6 10 2 1 3 4 0 5-6 0-12 0-16-2z" fill="#d3121a"/>
          <path d="M6 20q6 4 10 7" fill="none" stroke="#222" stroke-width="1"/>
          <path d="M13 27l3 3 3-3" fill="none" stroke="#222" stroke-width="1.300"/>
        </svg>
        <div class="ws">
          <div class="on"><svg width="17" height="24" viewBox="0 0 16 16">${SWIRL}</svg></div>
          <div class="mid"></div>
          <div></div>
        </div>
        <div class="handle h2"></div>
        <div class="tasks">
          ${TASKS.map(([k, l], i) => html`<div class="task ${i === 5 ? "act" : ""}">${taskIcon(k)}<span>${l}</span></div>`)}
        </div>
      </div>

      <div class="title">
        <svg class="wi" viewBox="0 0 16 16">${SWIRL}</svg>
        <div class="tt">Virtuoso® Analog Design Environment L Editing: 9b_series_split_Vcm-based_CDAC DAC schematic</div>
        <div class="wc"><span class="mn"></span><span class="mx"></span><span>✕</span></div>
      </div>

      <div class="menu">
        ${MENU.map(([a, u, b]) => html`<span class="mi">${a}<u>${u}</u>${b}</span>`)}
        <span class="cad">c<span>a</span>dence</span>
      </div>
      <div class="redl"></div>
      <div class="gapl"></div>

      ${ROWS.map(
        (r) => html`<div class="row ${r.cls}">
          ${r.segs.map(
            (s) => html`<div class="seg" style="width:${s.w}px"><span class="grip"></span>${s.items.map((it) => this.cell(it))}</div>`
          )}
        </div>`
      )}

      <div class="body">
        <div class="left">
          <div class="dock"><span class="dt">Navigator</span><span class="dbtn">?</span><span class="dbtn">❐</span><span class="dbtn">✕</span></div>
          <div class="nets"><span class="bk"></span><div class="nt">Nets<small>DAC</small></div></div>
          <div class="lsearch">${this.search()}<span class="dd2"></span></div>
          <div class="thead">Name</div>
          <div class="tree">
            <div class="trow top">
              <svg class="fo" width="18" height="16" viewBox="0 0 18 16"><path d="M1 2h6l2 2h6v3H1z" fill="#f2c080" stroke="#b07028"/><path d="M1 14l2-7h14l-2 7z" fill="#fdeccc" stroke="#b07028"/></svg>
              DAC
            </div>
            ${TREE.map(
              (n, i) => html`<div class="trow ${n === "net028" ? "hit" : ""} ${i === TREE.length - 1 ? "last" : ""}">
                ${n === "net028" ? html`<span class="nibg"></span>` : ""}
                ${n === "Vdacp<4:1>" || n === "Vdacp<8:1>" || n === "Vdacp<8:5>" ? html`<span class="plus"></span>` : ""}
                ${this.netIcon()}<span>${n}</span>
              </div>`
            )}
          </div>
          <div class="foot">
            <svg width="14" height="14" viewBox="0 0 14 14"><circle cx="7" cy="2.500" r="1.800" fill="none" stroke="#555"/><circle cx="2" cy="11.500" r="1.800" fill="none" stroke="#555"/><circle cx="7" cy="11.500" r="1.800" fill="none" stroke="#555"/><circle cx="12" cy="11.500" r="1.800" fill="none" stroke="#555"/><path d="M7 4v5.500M2 9.500V7h10v2.500" fill="none" stroke="#555"/></svg>
          </div>
          <div class="dock pr"><span class="dt">Property E...</span><span class="dbtn">?</span><span class="dbtn">❐</span><span class="dbtn">✕</span></div>
          <div class="pbox"><div class="sb"><span class="ar l"></span><span class="th"></span><span class="tr"></span><span class="ar r"></span></div></div>
        </div>
        <div class="strip"></div>
        <div class="canvas">${schematic()}</div>
      </div>

      <div class="s1">
        <div class="lf"><span class="g2"></span>mouse L: schSingleSelectPt()</div>
        <span class="mid">M: sevOpenCalculator()</span>
        <span>R: schHiMousePopUp()</span>
      </div>
      <div class="s2">
        <span class="pct">48(100)</span>
        <span class="wmsg">Wire name 'VSSA'</span>
        <span class="wm">bbs.eetop.cn</span>
        <div class="rt">
          <div style="width:213px">Cmd: Sel: 0  Status: Ready</div>
          <div style="width:76px">T=27  C</div>
          <div style="width:151px">Simulator: spectre</div>
          <div style="width:110px">State: state1</div>
          <span class="rg"></span>
        </div>
      </div>

      <div class="tip">9b_series_split_Vcm-based_CDAC DAC schematic</div>
    </div>`;
  }
}
